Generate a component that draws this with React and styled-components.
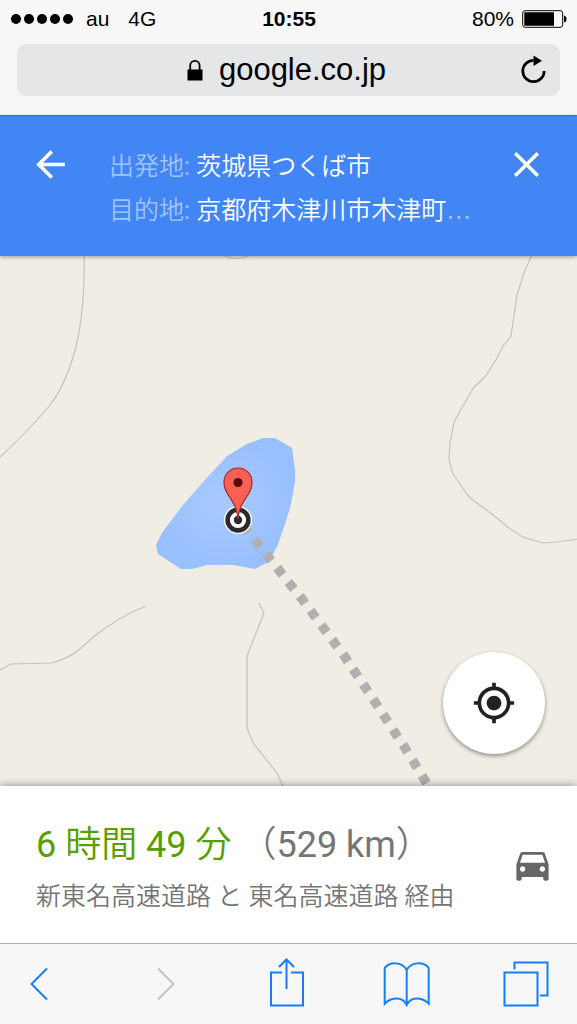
import React from "react";
import styled, { createGlobalStyle } from "styled-components";

const GlobalStyle = createGlobalStyle`
  * {
    box-sizing: border-box;
  }
  body {
    margin: 0;
    background: #f7f7f7;
    font-family: Roboto, "Noto Sans CJK JP DemiLight", "Noto Sans CJK JP", sans-serif;
  }
`;

const Page = styled.div`
  display: flex;
  flex-direction: column;
  min-height: 100vh;
`;

const IconButton = styled.button`
  display: flex;
  padding: 0;
  border: 0;
  background: none;
  color: inherit;
  cursor: pointer;
`;

const BrowserTop = styled.header`
  padding: 0 17px 19px;
  border-bottom: 1px solid #4a74b8;
  background: #f7f7f7;
  color: #000;
  font-family: "Liberation Sans", Arial, sans-serif;
`;

const StatusBar = styled.div`
  display: grid;
  grid-template-columns: 1fr auto 1fr;
  align-items: center;
  height: 38px;
  margin: 0 -7px 6px -6px;
  font-size: 21px;
  line-height: 24px;
`;

const StatusGroup = styled.div`
  display: flex;
  align-items: center;
  justify-content: ${p => p.$end ? "flex-end" : "flex-start"};
  gap: ${p => p.$end ? "8px" : "0"};
`;

const Dots = styled.div`
  display: flex;
  gap: 3px;
  margin-right: 13px;
`;

const Dot = styled.i`
  width: 10px;
  height: 10px;
  border-radius: 50%;
  background: #000;
`;

const Carrier = styled.span`
  margin-right: 19px;
`;

const AddressBar = styled.div`
  display: grid;
  grid-template-columns: 1fr auto 1fr;
  align-items: center;
  height: 52px;
  padding: 0 12px 0 8px;
  border-radius: 9px;
  background: #e5e6e8;
`;

const Address = styled.div`
  display: flex;
  grid-column: 2;
  align-items: center;
  gap: 16px;
  font-size: 31px;
  line-height: 36px;
`;

const Reload = styled(IconButton)`
  justify-self: end;
`;

const RouteHeader = styled.section`
  display: flex;
  align-items: flex-start;
  position: relative;
  z-index: 1;
  padding: 27px 29px 23px;
  background: #4285f4;
  box-shadow: 0 1px 4px rgba(0, 0, 0, 0.35);
  color: #fff;
`;

const Places = styled.div`
  flex: 1;
  min-width: 0;
  margin: 0 28px 0 37px;
  padding-top: 2px;
`;

const Place = styled.div`
  overflow: hidden;
  color: #a0c3ff;
  font-size: 25px;
  line-height: 44px;
  text-overflow: ellipsis;
  white-space: nowrap;
`;

const PlaceName = styled.span`
  color: #fff;
`;

const More = styled.span`
  font-family: "DejaVu Sans", sans-serif;
  line-height: 1;
`;

const MapArea = styled.main`
  display: flex;
  flex: 1;
  position: relative;
  min-height: 320px;
  background: #f0ede5;
`;

const MapDrawing = styled.svg`
  flex: 1;
  width: 100%;
  min-width: 0;
`;

const LocateButton = styled(IconButton)`
  align-items: center;
  justify-content: center;
  position: absolute;
  right: 32px;
  bottom: 32px;
  width: 102px;
  height: 102px;
  border-radius: 50%;
  background: #fff;
  box-shadow: 0 2px 4px rgba(0, 0, 0, 0.4);
  color: #212121;
`;

const Summary = styled.section`
  display: flex;
  align-items: center;
  justify-content: space-between;
  position: relative;
  padding: 0 23px 0 36px;
  background: #fff;
  box-shadow: 0 -1px 8px rgba(0, 0, 0, 0.35);
  color: #666;
`;

const SummaryText = styled.div`
  padding: 33px 0 20px;
  color: #757575;
  line-height: 52px;
`;

const Duration = styled.h1`
  margin: 0;
  font-size: 36px;
  font-weight: 400;
`;

const Time = styled.span`
  color: #569f00;
`;

const Via = styled.p`
  margin: 0;
  font-size: 25px;
`;

const Toolbar = styled.nav`
  display: flex;
  justify-content: space-between;
  position: relative;
  padding: 0 21px 0 20px;
  border-top: 1px solid #b0b0b0;
  background: #f7f7f7;
  color: #157efb;
`;

const ToolButton = styled(IconButton)`
  color: ${p => p.disabled ? "#c2c2c2" : "inherit"};
`;

const MaterialIcon = ({ d, size = 43 }) => (
  <svg width={size} height={size} viewBox="0 0 24 24" fill="currentColor" aria-hidden="true">
    <path d={d} />
  </svg>
);

const icons = {
  back: "M20 11H7.83l5.59-5.59L12 4l-8 8 8 8 1.41-1.41L7.83 13H20v-2z",
  close: "M19 6.41L17.59 5 12 10.59 6.41 5 5 6.41 10.59 12 5 17.59 6.41 19 12 13.41 17.59 19 19 17.59 13.41 12z",
  locate: "M12 8c-2.21 0-4 1.79-4 4s1.79 4 4 4 4-1.79 4-4-1.79-4-4-4zm8.94 3c-.46-4.17-3.77-7.48-7.94-7.94V1h-2v2.06C6.83 3.52 3.52 6.83 3.06 11H1v2h2.06c.46 4.17 3.77 7.48 7.94 7.94V23h2v-2.06c4.17-.46 7.48-3.77 7.94-7.94H23v-2h-2.06zM12 19c-3.87 0-7-3.13-7-7s3.13-7 7-7 7 3.13 7 7-3.13 7-7 7z",
  car: "M18.92 6.01C18.72 5.42 18.16 5 17.5 5h-11c-.66 0-1.21.42-1.42 1.01L3 12v8c0 .55.45 1 1 1h1c.55 0 1-.45 1-1v-1h12v1c0 .55.45 1 1 1h1c.55 0 1-.45 1-1v-8l-2.08-5.99zM6.5 16c-.83 0-1.5-.67-1.5-1.5S5.67 13 6.5 13s1.5.67 1.5 1.5S7.33 16 6.5 16zm11 0c-.83 0-1.5-.67-1.5-1.5s.67-1.5 1.5-1.5 1.5.67 1.5 1.5-.67 1.5-1.5 1.5zM5 11l1.5-4.5h11L19 11H5z",
};

const tools = [
  { label: "戻る", d: "M27 24.5L11.5 40L27 55.5" },
  { label: "進む", d: "M19 24.5L34.5 40L19 55.5", disabled: true },
  { label: "共有", d: "M24 28.5H13V61.5H45V28.5H33M28.5 45V15.5M21 23L28.5 15.5L36 23" },
  {
    label: "ブックマーク",
    d: "M29.7 26C25 17.5 13 17.5 7.7 24V59.7C13 54 25 51 29.7 61C34.5 51 46.5 54 51.7 59.7V24C46.5 17.5 34.5 17.5 29.7 26V61",
  },
  { label: "タブ", d: "M8.5 28.5H41.5V61.5H8.5ZM18.5 25.5V18.5H51.5V51.5H44" },
];

const LockIcon = () => (
  <svg width="16" height="22" viewBox="0 0 16 22" aria-hidden="true">
    <path d="M3.2 11V6.5a4.7 4.7 0 0 1 9.4 0V11" fill="none" stroke="#000" strokeWidth="1.8" />
    <path d="M.5 10.5h15v11H.5z" />
  </svg>
);

const ReloadIcon = () => (
  <svg width="30" height="32" viewBox="0 0 30 32" aria-hidden="true">
    <path d="M15.5 6.3A10.7 10.7 0 1 0 26.2 17" fill="none" stroke="#000" strokeWidth="2.7" />
    <path d="M15.5 1.5L24 6.8L15.5 12Z" />
  </svg>
);

const BatteryIcon = () => (
  <svg width="45" height="18" viewBox="0 0 45 18" role="img" aria-label="80%">
    <rect x=".7" y=".7" width="40" height="16.6" rx="2.5" fill="none" stroke="#000" strokeWidth="1" />
    <path d="M2.3 2.3H32V15.7H2.3ZM42 5.5Q44.5 6 44.5 9T42 12.5Z" />
  </svg>
);

const RouteMap = () => (
  <MapDrawing viewBox="0 256 577 530" preserveAspectRatio="xMidYMid slice" aria-hidden="true">
    <defs>
      <radialGradient id="lake">
        <stop offset="0" stopColor="#a9caff" />
        <stop offset="1" stopColor="#98bffe" />
      </radialGradient>
    </defs>
    <g fill="none" stroke="#c4c2bd" strokeWidth="1.2">
      <path d="M84 250C85 285 83 312 78 338C71 370 60 392 50 405C34 425 15 443 -2 459" />
      <path d="M222 254C230 260 243 260 252 254" />
      <path d="M534 250L524 273L517 295L511 336L503 346L497 358L485 377L474 387L460 411L454 423L450 443L449 460L453 474L469 497L497 518L510 529L523 537L543 543L556 542L579 539" />
      <path d="M-2 671L11 664L52 663C70 658 80 650 92 638C108 625 126 614 146 606" />
      <path d="M259 603L264 613L247 656V728L253 743L277 773L284 788" />
    </g>
    <path
      d="M156 545L162 533L183 505L203 482L227 456L247 444L263 438H275L292 448L295 470V482L290 508L284 527L277 547L268 562L255 569L233 565H207L192 569H181L158 554Z"
      fill="url(#lake)"
    />
    <path
      d="M246 529L257 542.7L302 599L345 657L375 702L405 748L432 792"
      fill="none"
      stroke="#b0b0b0"
      strokeWidth="9.5"
      strokeDasharray="9 9.1"
      strokeDashoffset="-13.5"
    />
    <circle cx="238" cy="520" r="14" fill="#fff" />
    <circle cx="238" cy="520" r="10.4" fill="#fff" stroke="#2b2b2b" strokeWidth="4.6" />
    <circle cx="238" cy="520" r="4.2" fill="#2b2b2b" />
    <path
      d="M238 519C236.8 506 232 501 227.5 494C225 490 224 486 224 482A14 14 0 0 1 252 482C252 486 251 490 248.5 494C244 501 239.2 506 238 519Z"
      fill="#fb6055"
      stroke="#a8262a"
      strokeWidth="1.2"
    />
    <circle cx="238" cy="482.5" r="4.6" fill="#5a0b0e" />
  </MapDrawing>
);

export default () => {
  return (
    <Page>
      <GlobalStyle />
      <BrowserTop>
        <StatusBar>
          <StatusGroup>
            <Dots>
              {[1, 2, 3, 4, 5].map(n => <Dot key={n} />)}
            </Dots>
            <Carrier>au</Carrier>
            <span>4G</span>
          </StatusGroup>
          <strong>10:55</strong>
          <StatusGroup $end>
            <span>80%</span>
            <BatteryIcon />
          </StatusGroup>
        </StatusBar>
        <AddressBar>
          <Address>
            <LockIcon />
            <span>google.co.jp</span>
          </Address>
          <Reload type="button" aria-label="再読み込み">
            <ReloadIcon />
          </Reload>
        </AddressBar>
      </BrowserTop>
      <RouteHeader>
        <IconButton type="button" aria-label="戻る">
          <MaterialIcon d={icons.back} />
        </IconButton>
        <Places>
          <Place>出発地: <PlaceName>茨城県つくば市</PlaceName></Place>
          <Place>目的地: <PlaceName>京都府木津川市木津町</PlaceName><More>…</More></Place>
        </Places>
        <IconButton type="button" aria-label="閉じる">
          <MaterialIcon d={icons.close} />
        </IconButton>
      </RouteHeader>
      <MapArea>
        <RouteMap />
        <LocateButton type="button" aria-label="現在地">
          <MaterialIcon d={icons.locate} size={44} />
        </LocateButton>
      </MapArea>
      <Summary>
        <SummaryText>
          <Duration><Time>6 時間 49 分</Time> （529 km）</Duration>
          <Via>新東名高速道路 と 東名高速道路 経由</Via>
        </SummaryText>
        <MaterialIcon d={icons.car} />
      </Summary>
      <Toolbar>
        {tools.map(t => (
          <ToolButton key={t.label} type="button" aria-label={t.label} disabled={t.disabled}>
            <svg width="60" height="80" viewBox="0 0 60 80" fill="none" stroke="currentColor" strokeWidth="2" aria-hidden="true">
              <path d={t.d} />
            </svg>
          </ToolButton>
        ))}
      </Toolbar>
    </Page>
  );
};
